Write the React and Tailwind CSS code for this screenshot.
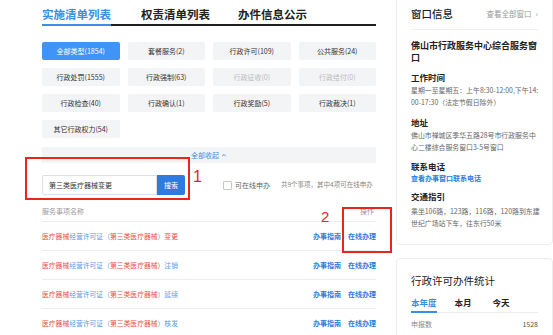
import React from "react";

const types = [
  { label: "全部类型(1854)", active: true },
  { label: "套餐服务(2)" },
  { label: "行政许可(109)" },
  { label: "公共服务(24)" },
  { label: "行政处罚(1555)" },
  { label: "行政强制(63)" },
  { label: "行政征收(0)", disabled: true },
  { label: "行政给付(0)", disabled: true },
  { label: "行政检查(40)" },
  { label: "行政确认(1)" },
  { label: "行政奖励(5)" },
  { label: "行政裁决(1)" },
  { label: "其它行政权力(54)" },
];

const rows = [
  { tail: "变更", tailRed: true, closeRed: false },
  { tail: "注销", tailRed: false, closeRed: true },
  { tail: "延续", tailRed: false, closeRed: false },
  { tail: "核发", tailRed: false, closeRed: false },
];

function ItemName({ row }) {
  return (
    <span className="text-[6.8px]">
      <span className="text-[#ef4e45]">医疗器械</span>
      <span className="text-[#5b9be8]">经营许可证（</span>
      <span className="text-[#ef4e45]">第三类医疗器械</span>
      <span className={row.closeRed ? "text-[#ef4e45]" : "text-[#5b9be8]"}>）</span>
      <span className={row.tailRed ? "text-[#ef4e45]" : "text-[#5b9be8]"}>{row.tail}</span>
    </span>
  );
}

export default function App() {
  return (
    <div
      className="relative w-[553px] h-[335px] overflow-hidden bg-white"
      style={{ fontFamily: '"Noto Sans CJK SC", "Noto Sans", sans-serif' }}
    >
      <div className="flex">
        {/* Left column */}
        <div className="ml-[42px] w-[334px] shrink-0">
          {/* Tabs */}
          <div className="flex h-[26px] items-end border-b-2 border-[#1f1f1f]">
            <div className="-mb-[2px] border-b-2 border-[#3a8ee6] pb-[4px] text-[11.5px] font-bold leading-none text-[#3a8ee6]">
              实施清单列表
            </div>
            <div className="ml-[30px] pb-[4px] text-[11.5px] font-bold leading-none text-[#222]">权责清单列表</div>
            <div className="ml-[28px] pb-[4px] text-[11.5px] font-bold leading-none text-[#222]">办件信息公示</div>
          </div>

          {/* Type buttons */}
          <div className="mt-[16px] grid grid-cols-4 gap-x-[8px] gap-y-[8px]">
            {types.map((t) => (
              <div
                key={t.label}
                className={`flex h-[18px] items-center justify-center rounded-[2px] text-[7px] ${
                  t.active
                    ? "bg-[#4094f5] text-white"
                    : t.disabled
                    ? "bg-[#f3f4f6] text-[#bbbbbb]"
                    : "bg-[#f3f4f6] text-[#333]"
                }`}
              >
                {t.label}
              </div>
            ))}
          </div>

          {/* Collapse bar */}
          <div className="mt-[9px] flex h-[16px] items-center justify-center bg-[#f3f4f6] text-[7px] text-[#3a8ee6]">
            全部收起
            <svg className="ml-[2px] h-[6px] w-[6px]" viewBox="0 0 10 10" fill="none" stroke="#3a8ee6" strokeWidth="1.6">
              <path d="M2 7l3-3 3 3" />
            </svg>
          </div>

          {/* Search */}
          <div className="mt-[12px] flex h-[20px] items-center">
            <div className="flex h-[20px] w-[115px] items-center rounded-l-[2px] border border-[#dcdfe6] pl-[6px] text-[7px] text-[#333]">
              第三类医疗器械变更
            </div>
            <div className="flex h-[20px] w-[28px] items-center justify-center rounded-r-[2px] bg-[#2e7be0] text-[7px] text-white">
              搜索
            </div>
            <div className="ml-[38px] h-[9px] w-[9px] rounded-[1px] border border-[#c8c8c8]" />
            <span className="ml-[3px] text-[7px] text-[#666]">可在线申办</span>
            <span className="ml-[11px] overflow-hidden whitespace-nowrap text-[6.5px] text-[#888]">共9个事项，其中4项可在线申办</span>
          </div>

          {/* Table header */}
          <div className="mt-[7px] flex h-[19px] items-center justify-between">
            <span className="text-[7px] text-[#999]">服务事项名称</span>
            <span className="mr-[2px] text-[7px] text-[#999]">操作</span>
          </div>

          {rows.map((r) => (
            <div key={r.tail} className="flex h-[29px] items-center justify-between border-t border-[#eeeeee]">
              <ItemName row={r} />
              <div className="flex gap-[7px] text-[7px] font-bold text-[#2e7be0]">
                <span>办事指南</span>
                <span>在线办理</span>
              </div>
            </div>
          ))}
        </div>

        {/* Right column */}
        <div className="ml-[20px] w-[157px] shrink-0">
          <div className="-mt-[6px] h-[251px] rounded-[4px] border border-[#ececec] px-[14px] whitespace-nowrap">
            <div className="flex h-[35px] items-center justify-between border-b border-[#eeeeee] pt-[4px]">
              <span className="text-[10.5px] font-medium text-[#222]">窗口信息</span>
              <span className="flex items-center text-[7.5px] text-[#999]">
                查看全部窗口
                <span className="ml-[4px] text-[8px]">›</span>
              </span>
            </div>
            <div className="mt-[10px] text-[9px] font-bold leading-[12px] text-[#222]">
              佛山市行政服务中心综合服务窗
              <br />口
            </div>
            <div className="mt-[7px] text-[8.5px] font-bold leading-[12px] text-[#222]">工作时间</div>
            <div className="mt-[2px] text-[6.9px] leading-[11.5px] text-[#666]">
              星期一至星期五：上午8:30-12:00,下午14:
              <br />
              00-17:30（法定节假日除外）
            </div>
            <div className="mt-[8px] text-[8.5px] font-bold leading-[12px] text-[#222]">地址</div>
            <div className="mt-[1px] text-[6.9px] leading-[12px] text-[#666]">
              佛山市禅城区季华五路28号市行政服务中
              <br />
              心二楼综合服务窗口3-5号窗口
            </div>
            <div className="mt-[7px] text-[8.5px] font-bold leading-[12px] text-[#222]">联系电话</div>
            <div className="mt-[1px] text-[7px] font-bold leading-[11px] text-[#2e7be0]">查看办事窗口联系电话</div>
            <div className="mt-[6px] text-[8.5px] font-bold leading-[12px] text-[#222]">交通指引</div>
            <div className="mt-[3px] text-[6.9px] leading-[12px] text-[#666]">
              乘坐106路，123路，116路，120路到东建
              <br />
              世纪广场站下车，往东行50米
            </div>
          </div>

          <div className="mt-[13px] h-[90px] rounded-[4px] border border-[#ececec] px-[14px] pt-[15px]">
            <div className="text-[10.5px] leading-[14px] text-[#222]">行政许可办件统计</div>
            <div className="mt-[8px] flex h-[17px] items-start border-b border-[#eeeeee] text-[8.5px] font-bold leading-[12px]">
              <span className="-mb-[1px] h-[17px] border-b-2 border-[#3a8ee6] text-[#3a8ee6]">本年度</span>
              <span className="ml-[18px] text-[#222]">本月</span>
              <span className="ml-[21px] text-[#222]">今天</span>
            </div>
            <div className="mt-[6px] flex items-center justify-between text-[7px] text-[#888]">
              <span>申报数</span>
              <span className="text-[#555]">1528</span>
            </div>
          </div>
        </div>
      </div>

      {/* Annotations */}
      <div className="absolute left-[25px] top-[157px] h-[43px] w-[165px] border-2 border-[#e8261c]" />
      <div className="absolute left-[193px] top-[169px] text-[16px] leading-none text-[#e8261c]" style={{ fontFamily: '"Liberation Sans", sans-serif' }}>1</div>
      <div className="absolute left-[342px] top-[207px] h-[46px] w-[50px] border-2 border-[#e8261c]" />
      <div className="absolute left-[321px] top-[209px] text-[15px] leading-none text-[#e8261c]" style={{ fontFamily: '"Liberation Sans", sans-serif' }}>2</div>
    </div>
  );
}
